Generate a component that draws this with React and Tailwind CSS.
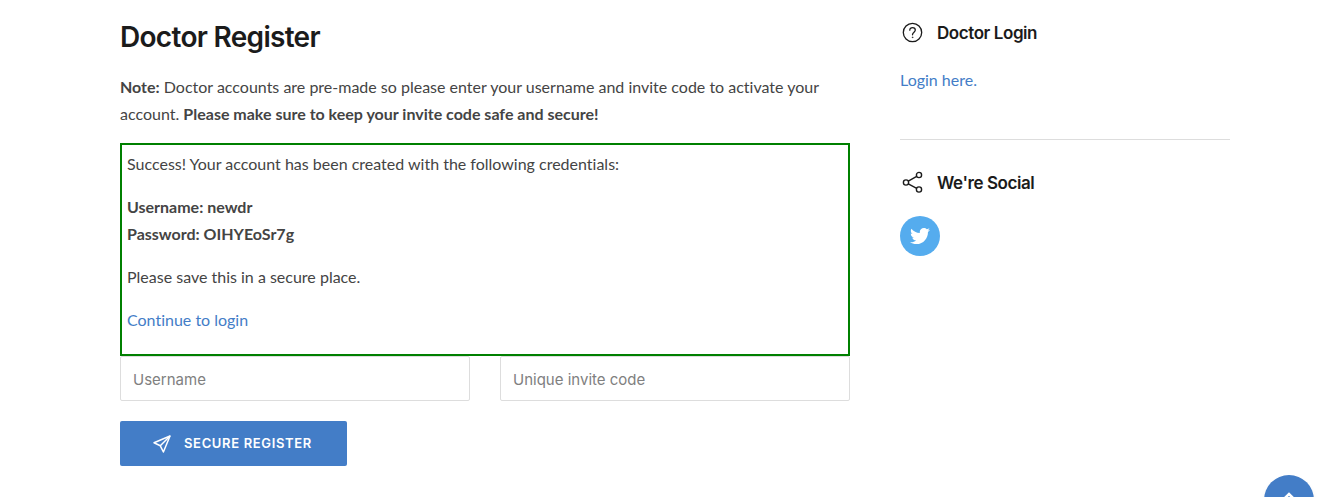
import React, { useState } from 'react';
import { FaTwitter } from 'react-icons/fa';

function SidebarTitle({ icon, children }) {
  return (
    <h2 className="flex items-center gap-[13px] font-['Inter',sans-serif] text-[17px] leading-6 font-semibold tracking-tight text-[#1b1b1b]">
      {icon}
      {children}
    </h2>
  );
}

function QuestionIcon() {
  return (
    <svg className="h-6 w-6 shrink-0" viewBox="0 0 24 24" fill="none" stroke="currentColor" strokeWidth="1.3" strokeLinecap="round" aria-hidden="true">
      <circle cx="12.5" cy="11.5" r="9.2" />
      <path d="M9.8 9.2C9.8 7.5 11 6.6 12.5 6.6s2.8 1 2.8 2.5c0 2-2.8 2.2-2.8 4.7" />
      <circle cx="12.5" cy="16.3" r="0.4" fill="currentColor" strokeWidth="0.6" />
    </svg>
  );
}

function ShareIcon() {
  return (
    <svg className="h-6 w-6 shrink-0" viewBox="0 0 24 24" fill="none" stroke="currentColor" strokeWidth="1.4" aria-hidden="true">
      <circle cx="19" cy="4" r="2.6" />
      <circle cx="6" cy="11.5" r="2.6" />
      <circle cx="19" cy="18.5" r="2.6" />
      <path d="M8.3 10.2l8.4-4.8M8.3 12.8l8.4 4.5" />
    </svg>
  );
}

function SendIcon() {
  return (
    <svg className="h-5 w-5 shrink-0" viewBox="0 0 20 20" fill="none" stroke="currentColor" strokeWidth="1.5" strokeLinejoin="round" aria-hidden="true">
      <path d="M18 2L2 8.8l6.3 3L11.4 18z" />
      <path d="M18 2l-9.7 9.8" />
    </svg>
  );
}

export default function App() {
  const [form, setForm] = useState({ username: '', invite_code: '' });

  const handleChange = (e) => {
    const { name, value } = e.target;
    setForm((p) => ({ ...p, [name]: value }));
  };

  const inputClass = "h-[45px] w-full rounded-xs border border-[#dddddd] bg-white px-3 pt-0.5 font-['Inter',sans-serif] text-[15px] text-[#444444] placeholder:text-[#808080] outline-none focus:border-[#437dc7]";

  return (
    <div className="bg-white pt-[19px] pr-[105px] pl-[120px] font-['Lato',sans-serif] text-[16px] leading-[27px] text-[#444444] [font-variant-ligatures:none]">
      <div className="grid grid-cols-[minmax(0,1fr)_330px] gap-[50px]">
        <main>
          <h1 className="mb-[18px] font-['Inter',sans-serif] text-[28px] leading-9 font-semibold tracking-tight text-[#1b1b1b]">Doctor Register</h1>
          <p className="mb-4">
            <strong>Note:</strong> Doctor accounts are pre-made so please enter your username and invite code to activate your account. <strong>Please make sure to keep your invite code safe and secure!</strong>
          </p>

          <div role="status" className="border-2 border-[#008000] p-[5px]">
            <p className="mb-4">Success! Your account has been created with the following credentials:</p>
            <p className="mb-4 font-bold">
              Username: newdr<br />
              Password: OIHYEoSr7g
            </p>
            <p className="mb-4">Please save this in a secure place.</p>
            <p className="mb-4"><a href="#login" className="text-[#437dc7]">Continue to login</a></p>
          </div>

          <form onSubmit={(e) => e.preventDefault()}>
            <div className="mb-5 grid grid-cols-2 gap-[30px]">
              <input name="username" aria-label="Username" placeholder="Username" value={form.username} onChange={handleChange} className={inputClass} />
              <input name="invite_code" aria-label="Unique invite code" placeholder="Unique invite code" value={form.invite_code} onChange={handleChange} className={inputClass} />
            </div>
            <button type="submit" className="flex h-[45px] items-center gap-3 rounded-xs bg-[#437dc7] pr-[35px] pl-8 font-['Inter',sans-serif] text-[13px] font-semibold tracking-wider text-white uppercase">
              <SendIcon />
              Secure Register
            </button>
          </form>
        </main>

        <aside>
          <section className="border-b border-[#dddddd] pt-[2px] pb-[46px]">
            <SidebarTitle icon={<QuestionIcon />}>Doctor Login</SidebarTitle>
            <p className="mt-[21px]"><a href="#login" className="text-[#437dc7]">Login here.</a></p>
          </section>
          <section className="pt-[31px]">
            <SidebarTitle icon={<ShareIcon />}>We're Social</SidebarTitle>
            <a href="#twitter" aria-label="Twitter" className="mt-[21px] flex h-10 w-10 items-center justify-center rounded-full bg-[#55acee] text-white">
              <FaTwitter className="h-5 w-5" />
            </a>
          </section>
        </aside>
      </div>

      <a href="#top" aria-label="Back to top" className="fixed right-[21px] -bottom-7 flex h-[50px] w-[50px] items-center justify-center rounded-full bg-[#437dc7] text-white shadow-md">
        <svg className="h-4 w-4" viewBox="0 0 16 16" fill="none" stroke="currentColor" strokeWidth="2.5" aria-hidden="true">
          <path d="M2 8l6-6 6 6" />
        </svg>
      </a>
    </div>
  );
}
